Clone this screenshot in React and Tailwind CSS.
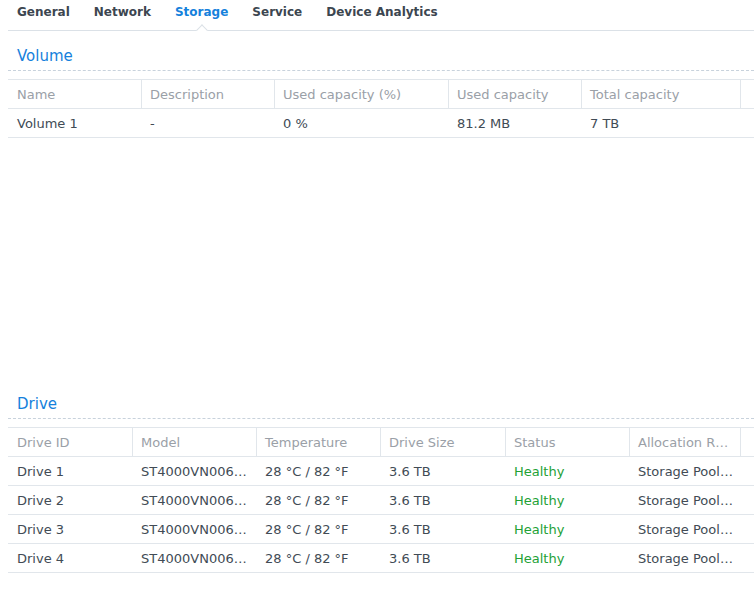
import React from "react";

const tabs = ["General", "Network", "Storage", "Service", "Device Analytics"];

const volumeCols = ["Name", "Description", "Used capacity (%)", "Used capacity", "Total capacity", ""];
const volumeRows = [["Volume 1", "-", "0 %", "81.2 MB", "7 TB", ""]];

const driveCols = ["Drive ID", "Model", "Temperature", "Drive Size", "Status", "Allocation R…", ""];
const driveRows = [1, 2, 3, 4].map((n) => [
  `Drive ${n}`,
  "ST4000VN006…",
  "28 °C / 82 °F",
  "3.6 TB",
  "Healthy",
  "Storage Pool…",
  "",
]);

const SectionTitle = ({ children }) => (
  <div className="h-[40px] pt-[16px] pl-[9px] border-b border-dashed border-[#c8d2dc] text-[15px] leading-[18px] text-[#1581dc]">
    {children}
  </div>
);

const Table = ({ cols, rows, gridClass }) => (
  <div className="mt-2 border-t border-[#e1e6eb]">
    <div className={`grid ${gridClass} border-b border-[#e1e6eb]`}>
      {cols.map((c, i) => (
        <div
          key={i}
          className={`h-[28px] pt-[2px] flex items-center whitespace-nowrap overflow-hidden text-[#9aa0a7] ${
            i === 0 ? "pl-[9px]" : "pl-2"
          } ${i < cols.length - 1 ? "border-r border-[#e1e6eb]" : ""}`}
        >
          {c}
        </div>
      ))}
    </div>
    {rows.map((row, r) => (
      <div key={r} className={`grid ${gridClass} border-b border-[#e1e6eb]`}>
        {row.map((cell, i) => (
          <div
            key={i}
            className={`h-[28px] pt-[2px] flex items-center whitespace-nowrap overflow-hidden ${
              i === 0 ? "pl-[9px]" : "pl-2"
            } ${cell === "Healthy" ? "text-[#23a136]" : "text-[#414b55]"}`}
          >
            {cell}
          </div>
        ))}
      </div>
    ))}
  </div>
);

export default function App() {
  return (
    <div
      className="w-[754px] h-[597px] overflow-hidden bg-white text-[13px] pl-2"
      style={{ fontFamily: '"DejaVu Sans", Verdana, sans-serif' }}
    >
      <div className="relative h-[31px] border-b border-[#dbe1e7] flex gap-6 pl-[9px]">
        {tabs.map((t) => (
          <div
            key={t}
            className={`relative pt-[5px] text-[12px] leading-[15px] font-bold ${
              t === "Storage" ? "text-[#1581dc]" : "text-[#3c4650]"
            }`}
          >
            {t}
            {t === "Storage" && (
              <span className="absolute left-1/2 top-[26px] -ml-1 w-2 h-2 rotate-45 bg-white border-l border-t border-[#dbe1e7]" />
            )}
          </div>
        ))}
      </div>

      <div className="h-[348px]">
        <SectionTitle>Volume</SectionTitle>
        <Table
          cols={volumeCols}
          rows={volumeRows}
          gridClass="grid-cols-[134px_133px_174px_133px_159px_1fr]"
        />
      </div>

      <div>
        <SectionTitle>Drive</SectionTitle>
        <Table
          cols={driveCols}
          rows={driveRows}
          gridClass="grid-cols-[125px_124px_124px_125px_124px_111px_1fr]"
        />
      </div>
    </div>
  );
}
